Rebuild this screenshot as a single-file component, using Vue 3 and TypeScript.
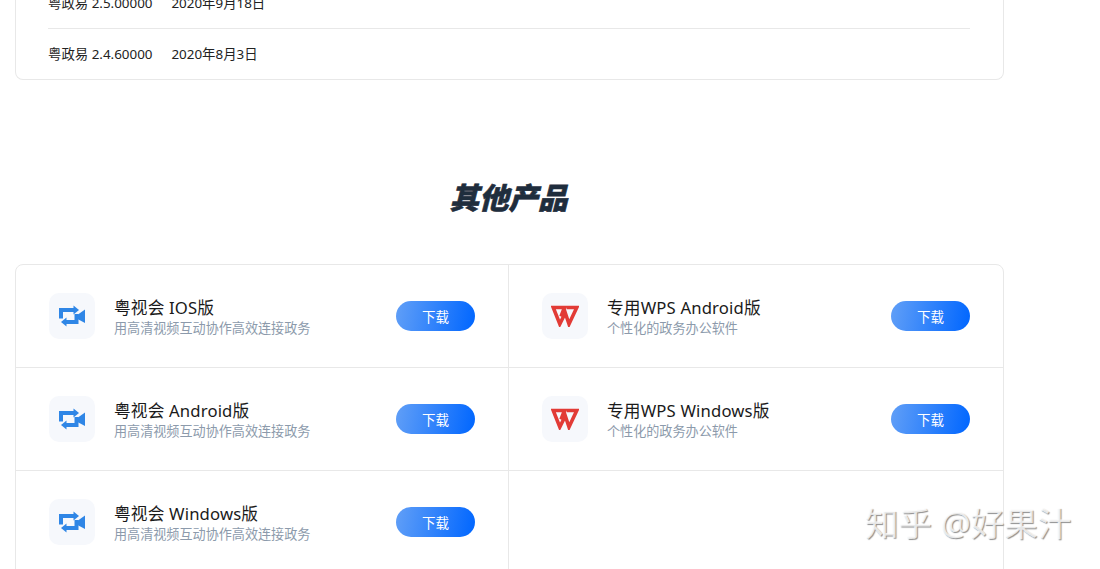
<template>
  <div class="page">
    <!-- 版本历史卡片（顶部被页面滚动裁切） -->
    <section class="history">
      <div v-for="item in history" :key="item.version" class="history-row">
        <span class="version">{{ item.version }}</span>
        <span>{{ item.date }}</span>
      </div>
    </section>

    <h2 class="title">其他产品</h2>

    <section class="products">
      <div v-for="p in products" :key="p.name" class="product">
        <div class="icon-box">
          <svg v-if="p.kind === 'meet'" width="28" height="22" viewBox="0 0 28 22" aria-hidden="true">
            <path fill="none" stroke="#2f86e6" stroke-width="4" d="M3 13.500V5H16" />
            <path fill="#2f86e6" d="M15.500 0.500L21 5 15.500 9.500z" />
            <path fill="none" stroke="#2f86e6" stroke-width="4" d="M18.500 9V17H8" />
            <path fill="#2f86e6" d="M8.500 12.500L3 17 8.500 21.500z" />
            <path fill="#2f86e6" d="M18.500 10.500L27 4.500V18L18.500 13.500z" />
          </svg>
          <svg v-else width="28" height="22" viewBox="0 0 28 22" aria-hidden="true">
            <path
              fill="none"
              stroke="#e23b36"
              stroke-width="3.600"
              stroke-linejoin="miter"
              d="M10 11.500L13.500 2.500H2.200L8.800 19L14.300 8L18 19L25.800 2.500H15.500"
            />
          </svg>
        </div>
        <div class="info">
          <div class="name">{{ p.name }}</div>
          <div class="desc">{{ p.desc }}</div>
        </div>
        <button class="download" type="button">下载</button>
      </div>
      <div class="product empty"></div>
    </section>

    <div class="watermark">知乎 @好果汁</div>
  </div>
</template>

<script setup lang="ts">
interface Product {
  name: string
  desc: string
  kind: 'meet' | 'wps'
}

const history = [
  { version: '粤政易 2.5.00000', date: '2020年9月18日' },
  { version: '粤政易 2.4.60000', date: '2020年8月3日' },
]

const meetDesc = '用高清视频互动协作高效连接政务'
const wpsDesc = '个性化的政务办公软件'

const products: Product[] = [
  { name: '粤视会 IOS版', desc: meetDesc, kind: 'meet' },
  { name: '专用WPS Android版', desc: wpsDesc, kind: 'wps' },
  { name: '粤视会 Android版', desc: meetDesc, kind: 'meet' },
  { name: '专用WPS Windows版', desc: wpsDesc, kind: 'wps' },
  { name: '粤视会 Windows版', desc: meetDesc, kind: 'meet' },
]
</script>

<style>
html,
body {
  margin: 0;
  background: #fff;
}
</style>

<style scoped>
.page {
  position: relative;
  width: 1100px;
  height: 569px;
  overflow: hidden;
  background: #fff;
  font-family: "Noto Sans", "Noto Sans CJK SC", sans-serif;
}

.history {
  box-sizing: border-box;
  width: 989px;
  height: 104px;
  margin: -24px 0 0 15px;
  padding: 0 33px 0 32px;
  border: 1px solid #e8e8e8;
  border-top: none;
  border-radius: 0 0 8px 8px;
}

.history-row {
  box-sizing: border-box;
  display: flex;
  align-items: center;
  height: 52px;
  font-size: 13.4px;
  color: #222;
}

.history-row + .history-row {
  padding-bottom: 3px;
  border-top: 1px solid #e8e8e8;
}

.version {
  margin-right: 19px;
}

.title {
  margin: 0;
  height: 184px;
  line-height: 236px;
  padding-right: 83px;
  box-sizing: border-box;
  text-align: center;
  font-size: 29.5px;
  font-style: italic;
  font-weight: 900;
  color: #1f2d3d;
  -webkit-text-stroke: 0.6px #1f2d3d;
}

.products {
  display: grid;
  grid-template-columns: 493px 494px;
  grid-template-rows: 102px 103px 103px;
  box-sizing: border-box;
  width: 989px;
  margin-left: 15px;
  border: 1px solid #e8e8e8;
  border-radius: 8px 8px 0 0;
}

.product {
  box-sizing: border-box;
  display: flex;
  align-items: center;
  padding: 0 33px;
}

.product:nth-child(odd) {
  border-right: 1px solid #e8e8e8;
}

.product:nth-child(n + 3) {
  border-top: 1px solid #e8e8e8;
}

.icon-box {
  flex: none;
  display: flex;
  align-items: center;
  justify-content: center;
  width: 46px;
  height: 46px;
  margin-right: 19px;
  border-radius: 10px;
  background: #f6f8fc;
}

.info {
  flex: 1;
  min-width: 0;
  padding-top: 1px;
}

.name {
  font-size: 16.7px;
  letter-spacing: 0.15px;
  line-height: 22px;
  color: #1a1a1a;
}

.desc {
  margin-top: 1px;
  font-size: 13.1px;
  line-height: 16px;
  color: #8c9aab;
}

.download {
  flex: none;
  width: 79px;
  height: 30px;
  padding: 0;
  border: none;
  border-radius: 15px;
  background: linear-gradient(100deg, #619ff7, #0066ff);
  color: #fff;
  font-family: inherit;
  font-size: 13.5px;
}

.watermark {
  position: absolute;
  left: 865px;
  top: 503px;
  font-size: 33.5px;
  line-height: 40px;
  white-space: nowrap;
  color: rgba(255, 255, 255, 0.8);
  text-shadow: 1px 1px 1px #8f8f8f;
}
</style>
